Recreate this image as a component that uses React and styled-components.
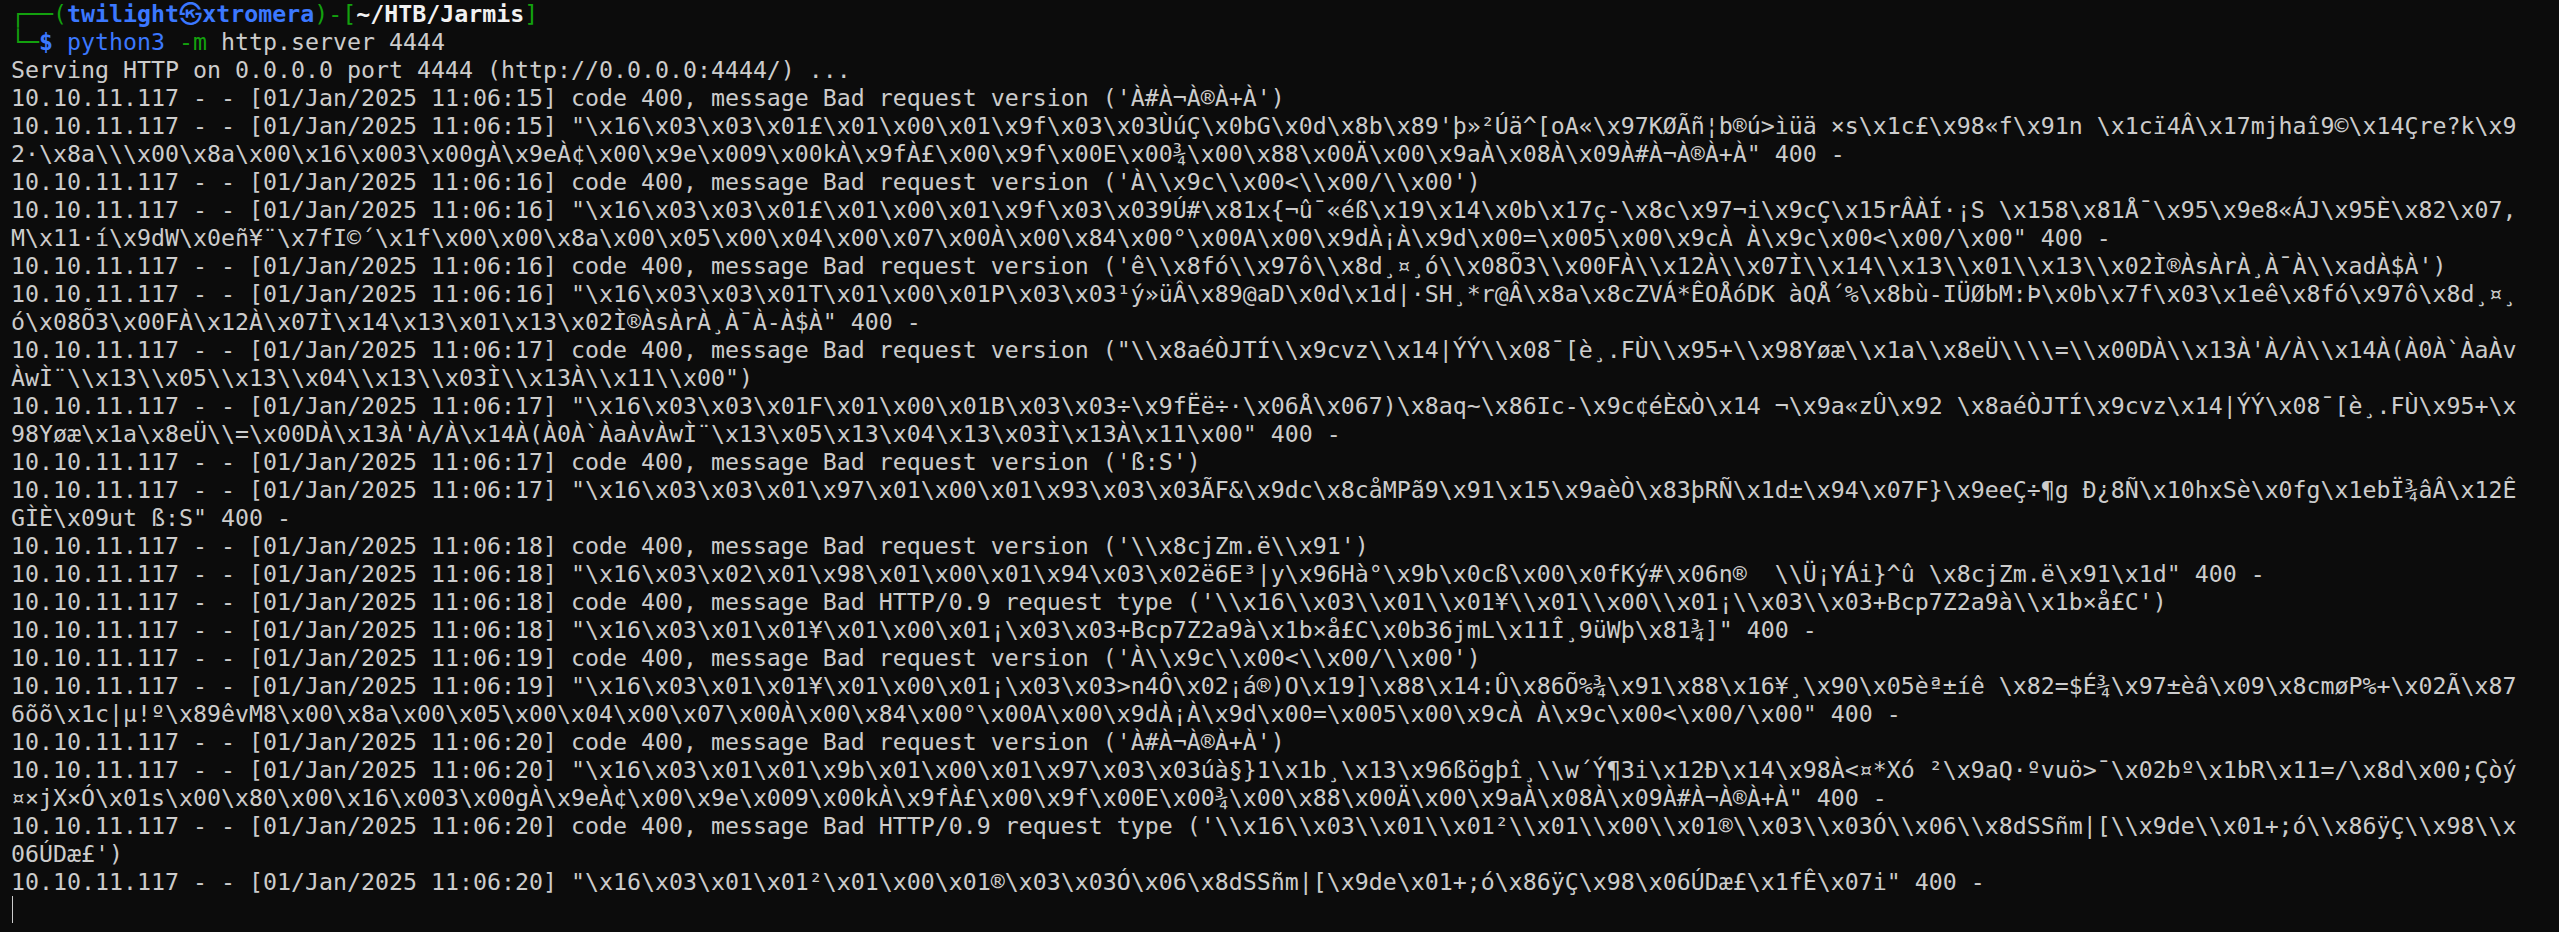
import React from "react";
import styled, { createGlobalStyle } from "styled-components";

const GlobalStyle = createGlobalStyle`
  html, body {
    margin: 0;
    padding: 0;
    background: #0c0c0c;
  }
`;

const Terminal = styled.div`
  box-sizing: border-box;
  width: 100%;
  min-height: 100vh;
  padding: 0 11px;
  background: #0c0c0c;
  color: #cccccc;
  font-family: "DejaVu Sans Mono", "Liberation Mono", "Noto Sans CJK KR", monospace;
  font-size: 23.25px;
  line-height: 28px;
  overflow: hidden;
`;

const Line = styled.div`
  height: 28px;
  white-space: pre;
`;

const Seg = styled.span`
  color: ${(p) => p.$color || "inherit"};
  font-weight: ${(p) => (p.$bold ? 700 : 400)};
`;

const Cursor = styled.span`
  display: inline-block;
  width: 1px;
  height: 27px;
  margin-left: 1px;
  vertical-align: top;
  background: #cccccc;
`;

const GREEN = "#13a10e";
const BLUE = "#3b78ff";
const WHITE = "#f2f2f2";
const BT = "`";

const LOG = String.raw`Serving HTTP on 0.0.0.0 port 4444 (http://0.0.0.0:4444/) ...
10.10.11.117 - - [01/Jan/2025 11:06:15] code 400, message Bad request version ('À#À¬À®À+À')
10.10.11.117 - - [01/Jan/2025 11:06:15] "\x16\x03\x03\x01£\x01\x00\x01\x9f\x03\x03ÙúÇ\x0bG\x0d\x8b\x89'þ»²Úä^[oA«\x97KØÃñ¦b®ú>ìüä ×s\x1c£\x98«f\x91n \x1cï4Â\x17mjhaî9©\x14Çre?k\x9
2·\x8a\\\x00\x8a\x00\x16\x003\x00gÀ\x9eÀ¢\x00\x9e\x009\x00kÀ\x9fÀ£\x00\x9f\x00E\x00¾\x00\x88\x00Ä\x00\x9aÀ\x08À\x09À#À¬À®À+À" 400 -
10.10.11.117 - - [01/Jan/2025 11:06:16] code 400, message Bad request version ('À\\x9c\\x00<\\x00/\\x00')
10.10.11.117 - - [01/Jan/2025 11:06:16] "\x16\x03\x03\x01£\x01\x00\x01\x9f\x03\x039Ú#\x81x{¬û¯«éß\x19\x14\x0b\x17ç-\x8c\x97¬i\x9cÇ\x15rÂÀÍ·¡S \x158\x81Å¯\x95\x9e8«ÁJ\x95È\x82\x07,
M\x11·í\x9dW\x0eñ¥¨\x7fI©´\x1f\x00\x00\x8a\x00\x05\x00\x04\x00\x07\x00À\x00\x84\x00°\x00A\x00\x9dÀ¡À\x9d\x00=\x005\x00\x9cÀ À\x9c\x00<\x00/\x00" 400 -
10.10.11.117 - - [01/Jan/2025 11:06:16] code 400, message Bad request version ('ê\\x8fó\\x97ô\\x8d¸¤¸ó\\x08Õ3\\x00FÀ\\x12À\\x07Ì\\x14\\x13\\x01\\x13\\x02Ì®ÀsÀrÀ¸À¯À\\xadÀ$À')
10.10.11.117 - - [01/Jan/2025 11:06:16] "\x16\x03\x03\x01T\x01\x00\x01P\x03\x03¹ý»üÂ\x89@aD\x0d\x1d|·SH¸*r@Â\x8a\x8cZVÁ*ÊOÅóDK àQÅ´%\x8bù-IÜØbM:Þ\x0b\x7f\x03\x1eê\x8fó\x97ô\x8d¸¤¸
ó\x08Õ3\x00FÀ\x12À\x07Ì\x14\x13\x01\x13\x02Ì®ÀsÀrÀ¸À¯À-À$À" 400 -
10.10.11.117 - - [01/Jan/2025 11:06:17] code 400, message Bad request version ("\\x8aéÒJTÍ\\x9cvz\\x14|ÝÝ\\x08¯[è¸.FÙ\\x95+\\x98Yøæ\\x1a\\x8eÜ\\\\=\\x00DÀ\\x13À'À/À\\x14À(À0À${BT}ÀaÀv
ÀwÌ¨\\x13\\x05\\x13\\x04\\x13\\x03Ì\\x13À\\x11\\x00")
10.10.11.117 - - [01/Jan/2025 11:06:17] "\x16\x03\x03\x01F\x01\x00\x01B\x03\x03÷\x9fËë÷·\x06Å\x067)\x8aq~\x86Ic-\x9c¢éÈ&Ò\x14 ¬\x9a«zÛ\x92 \x8aéÒJTÍ\x9cvz\x14|ÝÝ\x08¯[è¸.FÙ\x95+\x
98Yøæ\x1a\x8eÜ\\=\x00DÀ\x13À'À/À\x14À(À0À${BT}ÀaÀvÀwÌ¨\x13\x05\x13\x04\x13\x03Ì\x13À\x11\x00" 400 -
10.10.11.117 - - [01/Jan/2025 11:06:17] code 400, message Bad request version ('ß:S')
10.10.11.117 - - [01/Jan/2025 11:06:17] "\x16\x03\x03\x01\x97\x01\x00\x01\x93\x03\x03ÃF&\x9dc\x8cåMPã9\x91\x15\x9aèÒ\x83þRÑ\x1d±\x94\x07F}\x9eeÇ÷¶g Ð¿8Ñ\x10hxSè\x0fg\x1ebÏ¾âÂ\x12Ê
GÌÈ\x09ut ß:S" 400 -
10.10.11.117 - - [01/Jan/2025 11:06:18] code 400, message Bad request version ('\\x8cjZm.ë\\x91')
10.10.11.117 - - [01/Jan/2025 11:06:18] "\x16\x03\x02\x01\x98\x01\x00\x01\x94\x03\x02ë6E³|y\x96Hà°\x9b\x0cß\x00\x0fKý#\x06n®  \\Ü¡YÁi}^û \x8cjZm.ë\x91\x1d" 400 -
10.10.11.117 - - [01/Jan/2025 11:06:18] code 400, message Bad HTTP/0.9 request type ('\\x16\\x03\\x01\\x01¥\\x01\\x00\\x01¡\\x03\\x03+Bcp7Z2a9à\\x1b×å£C')
10.10.11.117 - - [01/Jan/2025 11:06:18] "\x16\x03\x01\x01¥\x01\x00\x01¡\x03\x03+Bcp7Z2a9à\x1b×å£C\x0b36jmL\x11Î¸9üWþ\x81¾]" 400 -
10.10.11.117 - - [01/Jan/2025 11:06:19] code 400, message Bad request version ('À\\x9c\\x00<\\x00/\\x00')
10.10.11.117 - - [01/Jan/2025 11:06:19] "\x16\x03\x01\x01¥\x01\x00\x01¡\x03\x03>n4Ô\x02¡á®)O\x19]\x88\x14:Û\x86Õ%¾\x91\x88\x16¥¸\x90\x05èª±íê \x82=$É¾\x97±èâ\x09\x8cmøP%+\x02Ã\x87
6õõ\x1c|µ!º\x89êvM8\x00\x8a\x00\x05\x00\x04\x00\x07\x00À\x00\x84\x00°\x00A\x00\x9dÀ¡À\x9d\x00=\x005\x00\x9cÀ À\x9c\x00<\x00/\x00" 400 -
10.10.11.117 - - [01/Jan/2025 11:06:20] code 400, message Bad request version ('À#À¬À®À+À')
10.10.11.117 - - [01/Jan/2025 11:06:20] "\x16\x03\x01\x01\x9b\x01\x00\x01\x97\x03\x03úà§}1\x1b¸\x13\x96ßögþî¸\\w´Ý¶3i\x12Ð\x14\x98À<¤*Xó ²\x9aQ·ºvuö>¯\x02bº\x1bR\x11=/\x8d\x00;Çòý
¤×jX×Ó\x01s\x00\x80\x00\x16\x003\x00gÀ\x9eÀ¢\x00\x9e\x009\x00kÀ\x9fÀ£\x00\x9f\x00E\x00¾\x00\x88\x00Ä\x00\x9aÀ\x08À\x09À#À¬À®À+À" 400 -
10.10.11.117 - - [01/Jan/2025 11:06:20] code 400, message Bad HTTP/0.9 request type ('\\x16\\x03\\x01\\x01²\\x01\\x00\\x01®\\x03\\x03Ó\\x06\\x8dSSñm|[\\x9de\\x01+;ó\\x86ÿÇ\\x98\\x
06ÚDæ£')
10.10.11.117 - - [01/Jan/2025 11:06:20] "\x16\x03\x01\x01²\x01\x00\x01®\x03\x03Ó\x06\x8dSSñm|[\x9de\x01+;ó\x86ÿÇ\x98\x06ÚDæ£\x1fÊ\x07i" 400 -`.split("\n");

export default function App() {
  return (
    <>
      <GlobalStyle />
      <Terminal>
        <Line>
          <Seg $color={GREEN}>┌──(</Seg>
          <Seg $color={BLUE} $bold>twilight㉿xtromera</Seg>
          <Seg $color={GREEN}>)-[</Seg>
          <Seg $color={WHITE} $bold>~/HTB/Jarmis</Seg>
          <Seg $color={GREEN}>]</Seg>
        </Line>
        <Line>
          <Seg $color={GREEN}>└─</Seg>
          <Seg $color={BLUE} $bold>$</Seg>{" "}
          <Seg $color={BLUE}>python3</Seg>{" "}
          <Seg $color={GREEN}>-m</Seg>{" "}
          <Seg>http.server 4444</Seg>
        </Line>
        {LOG.map((text, i) => (
          <Line key={i}>{text}</Line>
        ))}
        <Line>
          <Cursor />
        </Line>
      </Terminal>
    </>
  );
}
